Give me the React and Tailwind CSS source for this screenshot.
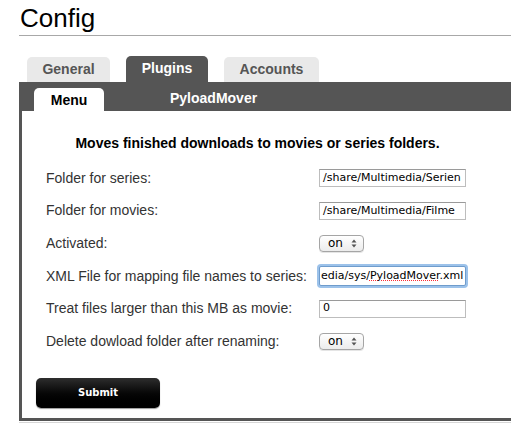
import React from "react";

const rows = [
  { label: "Folder for series:", type: "text", value: "/share/Multimedia/Serien" },
  { label: "Folder for movies:", type: "text", value: "/share/Multimedia/Filme" },
  { label: "Activated:", type: "select" },
  { label: "XML File for mapping file names to series:", type: "focus", value: "edia/sys/PyloadMover.xml" },
  { label: "Treat files larger than this MB as movie:", type: "text", value: "0" },
  { label: "Delete dowload folder after renaming:", type: "select" },
];

function Select() {
  return (
    <div className="w-[45px] h-[17px] rounded-[4px] border border-[#a5a5a5] bg-gradient-to-b from-white to-[#ececec] flex items-center pl-[8px] pr-[6px] justify-between shadow-[0_1px_0_#e5e5e5]">
      <span className="text-[12px] leading-none text-black font-['DejaVu_Sans',sans-serif]">on</span>
      <svg width="6" height="9" viewBox="0 0 6 9">
        <path d="M3 0.5 L5.5 3.5 L0.5 3.5 Z" fill="#555" />
        <path d="M3 8.5 L5.5 5.5 L0.5 5.5 Z" fill="#555" />
      </svg>
    </div>
  );
}

function Field({ row }) {
  if (row.type === "select") return <Select />;
  if (row.type === "focus") {
    return (
      <div className="w-[147px] h-[20px] border border-[#6f9ccc] rounded-[2px] shadow-[0_0_0_2px_#9cc2ea] bg-white flex items-center overflow-hidden pl-[1px]">
        <span className="text-[11px] whitespace-nowrap text-black font-['DejaVu_Sans',sans-serif]">
          edia/sys/<span className="underline decoration-dotted decoration-red-500">PyloadMover</span>.xml
        </span>
      </div>
    );
  }
  return (
    <div className="w-[147px] h-[18px] border border-[#bdbdbd] border-t-[#9a9a9a] bg-white flex items-center overflow-hidden pl-[3px]">
      <span className="text-[11px] whitespace-nowrap text-black font-['DejaVu_Sans',sans-serif]">{row.value}</span>
    </div>
  );
}

export default function App() {
  return (
    <div className="w-[511px] h-[423px] bg-white overflow-hidden font-['Liberation_Sans',Arial,sans-serif]">
      <div className="pl-[19px] pt-[3px]">
        <h1 className="text-[26px] leading-[30px] text-black pl-[1px]">Config</h1>
        <div className="mt-[2px] h-px bg-[#a8a8a8]" />

        <div className="flex mt-[21px] pl-[8px] gap-[16px] h-[25px] items-end">
          <div className="w-[83px] h-[25px] rounded-t-[5px] bg-[#e9e9e9] flex items-center justify-center text-[14px] font-bold text-[#555]">General</div>
          <div className="w-[82px] h-[26px] rounded-t-[5px] bg-[#555] flex items-center justify-center text-[14px] font-bold text-white pb-[2px]">Plugins</div>
          <div className="w-[95px] h-[25px] rounded-t-[5px] bg-[#e9e9e9] flex items-center justify-center text-[14px] font-bold text-[#555]">Accounts</div>
        </div>

        <div className="border-l-[3px] border-b-[3px] border-[#555]">
          <div className="h-[29px] bg-[#555] flex items-end pl-[12px] -ml-[3px]">
            <div className="w-[70px] h-[23px] bg-white rounded-t-[5px] flex items-center justify-center text-[14px] font-bold text-black pt-[2px] ml-[3px]">Menu</div>
            <div className="ml-[66px] self-start mt-[8px] text-[14px] font-bold text-white leading-[17px]">PyloadMover</div>
          </div>

          <div className="pt-[23px] pb-[10px]">
            <div className="text-center text-[14px] font-bold text-black leading-[18px] pr-[18px]">
              Moves finished downloads to movies or series folders.
            </div>
            <div className="mt-[10px] pl-[24px]">
              {rows.map((row) => (
                <div key={row.label} className="h-[32.6px] flex items-center">
                  <div className="w-[273px] text-[14px] text-[#333]">{row.label}</div>
                  <Field row={row} />
                </div>
              ))}
            </div>
            <button className="mt-[20px] ml-[14px] w-[124px] h-[30px] rounded-[5px] bg-gradient-to-b from-[#2e2e2e] via-[#080808] to-black text-white text-[10px] font-bold font-['DejaVu_Sans',sans-serif] shadow-[0_1px_1px_rgba(0,0,0,0.4)]">
              Submit
            </button>
          </div>
        </div>
        <div className="mt-[1px] h-[2px] bg-[#d6d6d6]" />
      </div>
    </div>
  );
}
